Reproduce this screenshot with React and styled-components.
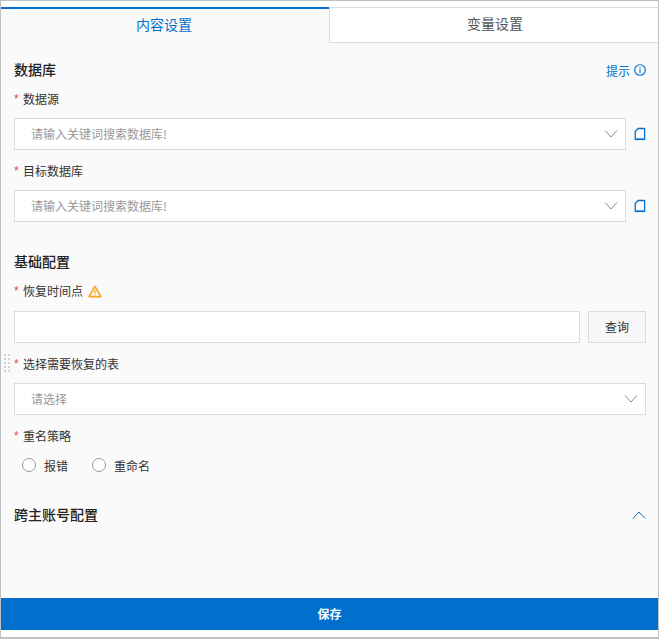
import styled, { createGlobalStyle } from "styled-components"

const GlobalStyle = createGlobalStyle`
  html, body { margin: 0; padding: 0; background: #fff; }
  body { font-family: "Noto Sans CJK SC", "Liberation Sans", sans-serif; }
`

const Panel = styled.div`
  width: 659px;
  height: 639px;
  box-sizing: border-box;
  border: 1px solid #c0c0c0;
  border-bottom-width: 2px;
  background: #fff;
  display: flex;
  flex-direction: column;
  position: relative;
`

const Tabs = styled.div`
  margin-top: 6px;
  height: 36px;
  display: flex;
  flex-shrink: 0;
`

const Tab = styled.div`
  box-sizing: border-box;
  width: ${p => (p.$active ? "328px" : "329px")};
  display: flex;
  align-items: center;
  justify-content: center;
  font-size: 14px;
  color: ${p => (p.$active ? "#0070cc" : "#555")};
  background: ${p => (p.$active ? "#fafafa" : "#fff")};
  border-top: ${p => (p.$active ? "2px solid #0070cc" : "1px solid #dcdcdc")};
  border-bottom: ${p => (p.$active ? "none" : "1px solid #dcdcdc")};
  border-left: ${p => (p.$active ? "none" : "1px solid #dcdcdc")};
  padding-bottom: 4px;
  padding-right: ${p => (p.$active ? "2px" : "0")};
  padding-left: ${p => (p.$active ? "0" : "2px")};
`

const Body = styled.div`
  flex: 1;
  background: #fafafa;
  padding: 17px 12px 0 13px;
  position: relative;
`

const SectionTitle = styled.div`
  box-sizing: border-box;
  height: 20px;
  padding-bottom: 2px;
  font-size: 14px;
  font-weight: 500;
  color: #222;
  display: flex;
  align-items: center;
  justify-content: space-between;
  margin-bottom: ${p => p.$after || 9}px;
`

const TitleExtra = styled.span`
  display: inline-flex;
  align-items: center;
  gap: 4px;
  margin-top: 2px;
  font-size: 12px;
  font-weight: 400;
  color: #0070cc;
`

const FormItem = styled.div`
  margin-bottom: ${p => p.$after || 11}px;
`

const Label = styled.div`
  height: 20px;
  line-height: 20px;
  font-size: 12px;
  color: #333;
  display: flex;
  align-items: center;
  margin-bottom: ${p => p.$after || 9}px;
`

const Star = styled.span`
  color: #e84738;
  width: 9px;
  font-family: "Liberation Sans", sans-serif;
  font-size: 12px;
`

const Row = styled.div`
  display: flex;
  align-items: center;
`

const Select = styled.div`
  flex: 1;
  box-sizing: border-box;
  height: 32px;
  background: #fff;
  border: 1px solid #dcdcdc;
  padding: 0 7px 0 16px;
  display: flex;
  align-items: center;
  justify-content: space-between;
  font-size: 12px;
  color: #999;
`

const Placeholder = styled.span`
  margin-bottom: 2px;
`

const Input = styled.div`
  flex: 1;
  box-sizing: border-box;
  height: 32px;
  background: #fff;
  border: 1px solid #dcdcdc;
`

const QueryButton = styled.button`
  box-sizing: border-box;
  width: 58px;
  height: 32px;
  margin-left: 8px;
  padding: 0 0 2px;
  background: #f7f7f7;
  border: 1px solid #dcdcdc;
  font-family: inherit;
  font-size: 12px;
  color: #333;
`

const BookLink = styled.span`
  width: 20px;
  display: flex;
  justify-content: flex-end;
  color: #0070cc;
`

const Radios = styled.div`
  height: 20px;
  display: flex;
  align-items: center;
  padding-left: 8px;
  gap: 24px;
`

const RadioItem = styled.label`
  display: flex;
  align-items: center;
  gap: 8px;
  font-size: 12px;
  color: #333;
`

const RadioDot = styled.span`
  box-sizing: border-box;
  width: 14px;
  height: 14px;
  border-radius: 50%;
  background: #fff;
  border: 1px solid #999;
`

const DragHandle = styled.div`
  position: absolute;
  left: 3px;
  top: 311px;
  width: 6px;
  height: 18px;
  display: grid;
  grid-template-columns: 2px 2px;
  grid-auto-rows: 2px;
  gap: 2px;
  & > i { background: #d4d4d4; }
`

const SaveBar = styled.button`
  flex-shrink: 0;
  height: 32px;
  margin-bottom: 7px;
  padding: 0 0 2px;
  border: none;
  background: #0070cc;
  color: #fff;
  font-family: inherit;
  font-size: 12px;
  font-weight: 700;
`

const Chevron = ({ up, color = "#888" }) => (
  <svg width="14" height="8" viewBox="0 0 14 8" fill="none" stroke={color} strokeWidth="1" style={{ flexShrink: 0 }}>
    <path d={up ? "M1 7.5L7 1l6 6.5" : "M1 .5L7 7l6-6.5"} />
  </svg>
)

const BookIcon = () => (
  <svg width="12" height="14" viewBox="0 0 12 14" fill="none" stroke="currentColor" strokeWidth="1.3" style={{ flexShrink: 0 }}>
    <path d="M4 1.5H10.6V12.3H1.2V4.5z" strokeLinejoin="round" />
    <path d="M1.2 12.3H11" strokeWidth="1.6" />
  </svg>
)

const InfoIcon = () => (
  <svg width="12" height="12" viewBox="0 0 12 12" fill="none" stroke="currentColor" strokeWidth="1.1">
    <circle cx="6" cy="6" r="5.3" />
    <path d="M6 5v4M6 3v1.2" />
  </svg>
)

const WarnIcon = () => (
  <svg width="14" height="13" viewBox="0 0 14 13" fill="none" stroke="#f5a623" strokeWidth="1.6" style={{ marginLeft: 5 }}>
    <path d="M7 1.5L1 11.6h12z" strokeLinejoin="round" />
    <path d="M7 5v3.4M7 9.2v1" strokeWidth="1.2" />
  </svg>
)

const DatabaseSelect = () => (
  <Row>
    <Select>
      <Placeholder>请输入关键词搜索数据库!</Placeholder>
      <Chevron />
    </Select>
    <BookLink>
      <BookIcon />
    </BookLink>
  </Row>
)

const App = () => {
  return (
    <>
      <GlobalStyle />
      <Panel>
        <Tabs>
          <Tab $active>内容设置</Tab>
          <Tab>变量设置</Tab>
        </Tabs>
        <Body>
          <SectionTitle>
            数据库
            <TitleExtra>
              提示 <InfoIcon />
            </TitleExtra>
          </SectionTitle>
          <FormItem>
            <Label><Star>*</Star>数据源</Label>
            <DatabaseSelect />
          </FormItem>
          <FormItem $after={30}>
            <Label><Star>*</Star>目标数据库</Label>
            <DatabaseSelect />
          </FormItem>

          <SectionTitle>基础配置</SectionTitle>
          <FormItem>
            <Label $after={10}><Star>*</Star>恢复时间点<WarnIcon /></Label>
            <Row>
              <Input />
              <QueryButton>查询</QueryButton>
            </Row>
          </FormItem>
          <FormItem>
            <Label><Star>*</Star>选择需要恢复的表</Label>
            <Select>
              <Placeholder>请选择</Placeholder>
              <Chevron />
            </Select>
          </FormItem>
          <FormItem $after={30}>
            <Label><Star>*</Star>重名策略</Label>
            <Radios>
              <RadioItem><RadioDot />报错</RadioItem>
              <RadioItem><RadioDot />重命名</RadioItem>
            </Radios>
          </FormItem>

          <SectionTitle>
            跨主账号配置
            <TitleExtra>
              <Chevron up color="#0070cc" />
            </TitleExtra>
          </SectionTitle>

          <DragHandle>
            {Array.from({ length: 10 }).map((_, i) => <i key={i} />)}
          </DragHandle>
        </Body>
        <SaveBar>保存</SaveBar>
      </Panel>
    </>
  )
}

export default App
